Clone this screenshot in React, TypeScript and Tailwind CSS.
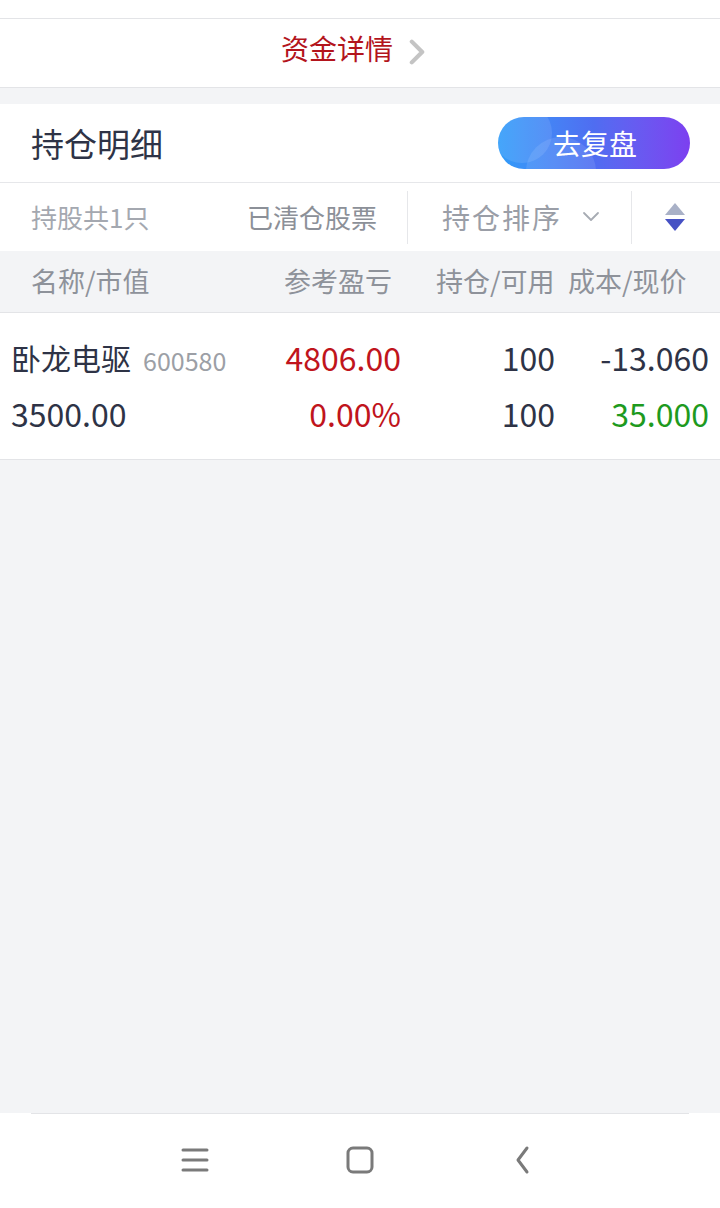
import { ReactElement } from "react";

const font = { fontFamily: '"Noto Sans CJK SC", "Noto Sans", sans-serif' };

const SortIcon = () => (
	<svg width="22" height="32" viewBox="0 0 22 32">
		<path d="M11 2 L21 14 H1 Z" fill="#a9b1c7" />
		<path d="M1 18 H21 L11 30 Z" fill="#4651c4" />
	</svg>
);

const Chevron = ({ color, w, h, sw }: { color: string; w: number; h: number; sw: number }) => (
	<svg width={w} height={h} viewBox="0 0 12 20" fill="none">
		<path d="M2 2 L10 10 L2 18" stroke={color} strokeWidth={sw} strokeLinecap="round" strokeLinejoin="round" />
	</svg>
);

const NavBar = () => (
	<div className="bg-white h-[95px] flex flex-col">
		<div className="mx-[31px] border-t border-[#e3e4e7]" />
		<div className="flex-1 flex items-center justify-center">
			<div className="flex items-center pb-[2px]">
				<div className="w-[165px] flex justify-center">
					<svg width="30" height="28" viewBox="0 0 30 28">
						<path d="M3 4 H27 M3 14 H27 M3 24 H27" stroke="#7a7a7a" strokeWidth="3" strokeLinecap="round" />
					</svg>
				</div>
				<div className="w-[165px] flex justify-center">
					<svg width="30" height="30" viewBox="0 0 30 30" fill="none">
						<rect x="3" y="3" width="24" height="24" rx="5" stroke="#7a7a7a" strokeWidth="3" />
					</svg>
				</div>
				<div className="w-[165px] flex justify-center pr-[6px]">
					<svg width="20" height="30" viewBox="0 0 20 30" fill="none">
						<path d="M15 3 L6 15 L15 27" stroke="#7a7a7a" strokeWidth="3" strokeLinecap="round" strokeLinejoin="round" />
					</svg>
				</div>
			</div>
		</div>
	</div>
);

const App = (): ReactElement => {
	return (
		<div style={font} className="min-h-[1208px] w-[720px] flex flex-col bg-[#f3f4f6]">
			<div className="h-[19px] bg-white border-b border-[#e3e4e7]" />
			<div className="h-[69px] bg-white border-b border-[#e3e4e7] flex items-center justify-center gap-[16px] pr-[14px] pb-[10px]">
				<span className="text-[28px] text-[#b3141c] leading-none">资金详情</span>
				<div className="mt-[8px]">
					<Chevron color="#c4c4c4" w={16} h={26} sw={3.2} />
				</div>
			</div>

			<div className="h-[16px]" />

			<div className="bg-white">
				<div className="h-[79px] flex items-center justify-between pl-[31px] pr-[30px] border-b border-[#e6e7ea]">
					<span className="text-[33px] text-[#2e3346] leading-none">持仓明细</span>
					<div className="relative w-[192px] h-[52px] rounded-full overflow-hidden bg-gradient-to-r from-[#2f9cf9] via-[#4f6df1] to-[#7c3ff0] flex items-center justify-center">
						<div className="absolute left-[-6px] top-[-14px] w-[60px] h-[60px] rounded-full bg-white/10" />
						<div className="absolute left-[28px] top-[20px] w-[70px] h-[70px] rounded-full bg-white/10" />
						<span className="relative text-[28px] text-white leading-none pl-[2px]">去复盘</span>
					</div>
				</div>

				<div className="h-[68px] flex items-center">
					<span className="pl-[31px] w-[247px] text-[26px] text-[#a4a8b0] leading-none">持股共1只</span>
					<span className="w-[160px] text-[26px] text-[#8c9098] leading-none">已清仓股票</span>
					<div className="w-px h-[53px] bg-[#e6e7ea]" />
					<div className="w-[223px] flex items-center pl-[34px] gap-[20px]">
						<span className="text-[28px] text-[#9a9ea7] leading-none tracking-[2px]">持仓排序</span>
						<svg width="18" height="12" viewBox="0 0 18 12" fill="none">
							<path d="M2 2 L9 9 L16 2" stroke="#a7abb3" strokeWidth="1.8" strokeLinecap="round" strokeLinejoin="round" />
						</svg>
					</div>
					<div className="w-px h-[53px] bg-[#e6e7ea]" />
					<div className="flex-1 flex justify-center pr-[2px]">
						<SortIcon />
					</div>
				</div>
			</div>

			<div className="h-[62px] flex items-center border-b border-[#e3e4e7] text-[27px] text-[#8e929a] leading-none pb-[3px]">
				<span className="pl-[31px] w-[250px]">名称/市值</span>
				<span className="w-[142px] text-right">参考盈亏</span>
				<span className="pl-[44px] w-[176px]">持仓/可用</span>
				<span className="">成本/现价</span>
			</div>

			<div className="bg-white h-[147px] border-b border-[#e3e4e7] flex flex-col justify-center gap-[24px] px-[11px] pb-[2px] text-[32px] leading-none text-[#2e3346]">
				<div className="flex items-center">
					<div className="w-[250px] flex items-center gap-[12px]">
						<span className="text-[30px]">卧龙电驱</span>
						<span className="text-[25px] text-[#9c9fa6] mt-[6px]">600580</span>
					</div>
					<span className="w-[140px] text-right text-[#c0141c]">4806.00</span>
					<span className="w-[154px] text-right">100</span>
					<span className="w-[154px] text-right">-13.060</span>
				</div>
				<div className="flex items-center">
					<span className="w-[250px]">3500.00</span>
					<span className="w-[140px] text-right text-[#c0141c]">0.00%</span>
					<span className="w-[154px] text-right">100</span>
					<span className="w-[154px] text-right text-[#1e9a1e]">35.000</span>
				</div>
			</div>

			<div className="flex-1" />
			<NavBar />
		</div>
	);
};

export default App;
